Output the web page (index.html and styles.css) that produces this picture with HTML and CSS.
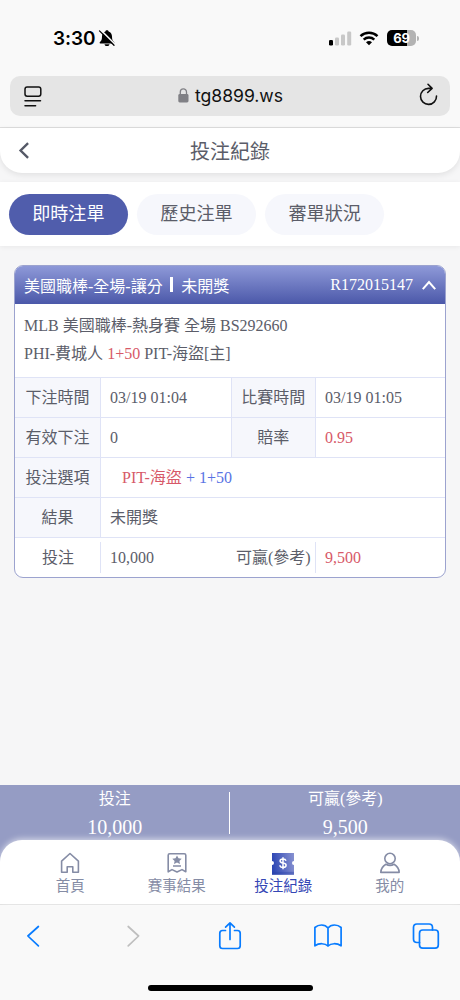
FILE: index.html
```html
<!DOCTYPE html>
<html lang="zh-Hant">
<head>
<meta charset="utf-8">
<meta name="viewport" content="width=device-width, initial-scale=1">
<title>投注紀錄</title>
<link rel="stylesheet" href="styles.css">
</head>
<body>
<div class="screen">
  <header class="browser-top">
    <div class="status">
      <div class="status-left">
        <span class="clock">3:30</span>
        <svg width="18" height="18" viewBox="0 0 18 18">
          <path d="M9 1.200c-.9 0-1.500.5-1.600 1.300C5 3.300 4 5.200 4 7.600c0 3-.6 4.200-2 5.500-.7.7-.4 1.300.3 1.300h13.400c.7 0 1-.6.3-1.300-1.400-1.300-2-2.500-2-5.500 0-2.400-1-4.300-3.400-5.100C10.500 1.700 9.900 1.200 9 1.200zM6.500 15.200h5c-.2 1.200-1.200 1.900-2.500 1.900s-2.300-.7-2.500-1.900z" fill="#000"/>
          <path d="M2.600.9l14 14" stroke="#f9f9f9" stroke-width="1.500"/>
          <path d="M1.500 1.900l14.500 14.400" stroke="#000" stroke-width="1.300" stroke-linecap="round"/>
        </svg>
      </div>
      <div class="status-right">
        <svg class="signal" width="23" height="15" viewBox="0 0 23 15">
          <rect x="0" y="9" width="4" height="5.500" rx="1.200" fill="#000"/>
          <rect x="6" y="6.500" width="4" height="8" rx="1.200" fill="#c8c8c8"/>
          <rect x="12" y="3.500" width="4" height="11" rx="1.200" fill="#c8c8c8"/>
          <rect x="18.200" y=".5" width="4" height="14" rx="1.200" fill="#c8c8c8"/>
        </svg>
        <svg class="wifi" width="20" height="15" viewBox="0 0 20 15">
          <path d="M1.500 5.200a12.500 12.500 0 0 1 17 0M4.700 8.600a7.800 7.800 0 0 1 10.600 0" fill="none" stroke="#000" stroke-width="2.500"/>
          <path d="M10 14.300l-3-3a4.500 4.500 0 0 1 6 0z" fill="#000"/>
        </svg>
        <div class="battery"><span class="level">69</span><i class="cap"></i></div>
      </div>
    </div>
    <div class="address">
      <svg width="18" height="21" viewBox="0 0 18 21" fill="none" stroke="#111" stroke-width="1.500" stroke-linecap="round">
        <rect x="1" y="1" width="15.800" height="9.200" rx="2.200"/><path d="M1 14.800h15.500M1 19.800h10.600"/>
      </svg>
      <div class="host">
        <svg width="11" height="15" viewBox="0 0 11 15"><rect x=".3" y="6" width="10.200" height="8.500" rx="1.400" fill="#808085"/><path d="M2.300 6.500V4a3.100 3.100 0 0 1 6.200 0v2.500" fill="none" stroke="#808085" stroke-width="1.300"/></svg>
        <span>tg8899.ws</span>
      </div>
      <svg class="reload" width="19" height="23" viewBox="0 0 19 23" fill="none" stroke="#111" stroke-width="1.600" stroke-linecap="round" stroke-linejoin="round">
        <path d="M12.300 5.400H9.500a8 8 0 1 0 8 7.700M9 1.300l4.100 4.100L8.700 9.500"/>
      </svg>
    </div>
  </header>

  <main class="page">
    <div class="title-bar">
      <svg width="12" height="18" viewBox="0 0 12 18" fill="none" stroke="#555967" stroke-width="2.400"><path d="M10.100 1.200L2.600 8.500l7.500 7.300"/></svg>
      <h1>投注紀錄</h1>
    </div>
    <nav class="tabs">
      <span class="tab active">即時注單</span>
      <span class="tab">歷史注單</span>
      <span class="tab">審單狀況</span>
    </nav>

    <section class="ticket">
      <div class="ticket-head">
        <span>美國職棒-全場-讓分</span><i class="bar"></i><span>未開獎</span>
        <span class="serial">R172015147</span>
        <svg width="14" height="10" viewBox="0 0 14 10" fill="none" stroke="#fff" stroke-width="2"><path d="M.8 9.200L7 2l6.200 7.200"/></svg>
      </div>
      <div class="match">
        <div>MLB 美國職棒-熱身賽 全場 BS292660</div>
        <div>PHI-費城人 <span class="red">1+50</span> PIT-海盜[主]</div>
      </div>
      <div class="grid">
        <div class="label">下注時間</div><div class="value">03/19 01:04</div><div class="label second">比賽時間</div><div class="value">03/19 01:05</div>
        <div class="label">有效下注</div><div class="value">0</div><div class="label second">賠率</div><div class="value red">0.95</div>
        <div class="label">投注選項</div><div class="value wide pick"><span class="red">PIT-海盜</span><span class="blue">&nbsp;+ 1+50</span></div>
        <div class="label">結果</div><div class="value wide">未開獎</div>
        <div class="label plain">投注</div><div class="value">10,000</div><div class="label plain">可贏(參考)</div><div class="value red">9,500</div>
      </div>
    </section>
  </main>

  <section class="summary">
    <div class="total"><span>投注</span><b>10,000</b></div>
    <i class="divider"></i>
    <div class="total"><span>可贏(參考)</span><b>9,500</b></div>
  </section>
  <nav class="app-nav">
    <div class="nav-item">
      <svg width="24" height="24" viewBox="0 0 24 24" fill="none" stroke="#858ca5" stroke-width="1.600" stroke-linejoin="round"><path d="M3.600 10.100L12 2.500l8.400 7.600v11.100h-5.600v-5.500H9.200v5.500H3.600z"/></svg>
      <span>首頁</span>
    </div>
    <div class="nav-item">
      <svg width="24" height="24" viewBox="0 0 24 24" fill="none" stroke="#858ca5" stroke-width="1.600" stroke-linejoin="round"><path d="M3.200 4.200q0-1.500 1.500-1.500h14.600q1.500 0 1.500 1.500v16.600L17 18.600l-5 2.400-5-2.400-3.800 2.200zM8 15h8"/><path d="M12 4.400l1.500 2.900 3.200.4-2.300 2.200.6 3.200-3-1.500-3 1.500.6-3.200-2.300-2.200 3.200-.4z" fill="#858ca5" stroke="none"/></svg>
      <span>賽事結果</span>
    </div>
    <div class="nav-item current">
      <svg width="24" height="24" viewBox="0 0 24 24"><defs><linearGradient id="ticketFill" x1="0" y1=".2" x2="1" y2=".1"><stop stop-color="#2e47b5"/><stop offset="1" stop-color="#8791d0"/></linearGradient></defs><path d="M1 2h22v8a2 2 0 0 0 0 4v9.800H1V14a2 2 0 0 0 0-4z" fill="url(#ticketFill)"/><path d="M1 22.300h22" stroke="#2941a8" stroke-opacity=".4" stroke-width="3"/><path d="M15 9.700c-.3-1.200-1.400-1.800-3-1.800-1.700 0-2.900.8-2.900 2.100 0 3 6 1.200 6 4.200 0 1.400-1.200 2.200-3 2.200-1.900 0-3.100-.8-3.200-2.200M12 6.200v12" fill="none" stroke="#fff" stroke-width="1.500"/></svg>
      <span>投注紀錄</span>
    </div>
    <div class="nav-item">
      <svg width="24" height="24" viewBox="0 0 24 24" fill="none" stroke="#858ca5" stroke-width="1.600" stroke-linejoin="round"><circle cx="12" cy="7.500" r="5.200"/><path d="M2.800 21.400c.2-3.500 2-6.300 5.100-8.100q4.100 2.200 8.200 0c3.100 1.800 4.900 4.600 5.100 8.100z"/></svg>
      <span>我的</span>
    </div>
  </nav>

  <footer class="browser-bottom">
    <div class="tools">
      <svg width="28" height="30" viewBox="0 0 28 30"><path d="M18.400 5.500L7.900 15l10.500 9.800"/></svg>
      <svg class="disabled" width="28" height="30" viewBox="0 0 28 30"><path d="M10.200 5.500L20.600 15l-10.400 9.800"/></svg>
      <svg width="28" height="30" viewBox="0 0 28 30"><path d="M9.500 9.500H6.500q-2.700 0-2.700 2.700v12.600q0 2.700 2.700 2.700h15q2.700 0 2.700-2.700V12.200q0-2.700-2.700-2.700h-3M14 18.500V2M9.600 6.200L14 1.800l4.400 4.400"/></svg>
      <svg width="28" height="30" viewBox="0 0 28 30"><path d="M14 7c-1.500-2-4-3-6.500-3S2.700 4.900.9 6.500v18.300C5 22 11 22 14 25c3-3 9-3 13.100-.2V6.500C25.300 4.900 23 4 20.500 4S15.500 5 14 7zv18"/></svg>
      <svg width="28" height="30" viewBox="0 0 28 30"><rect x="7.500" y="9" width="18.800" height="18.200" rx="3.200"/><path d="M7.500 21.500H5q-3.500 0-3.500-3.500V6.500Q1.500 3 5 3h12q3.500 0 3.500 3.500V9"/></svg>
    </div>
    <i class="home-bar"></i>
  </footer>
</div>
</body>
</html>
```
FILE: styles.css
```css
* { box-sizing: border-box; }
body { margin: 0; background: #f6f6f7; }
svg { display: block; flex: none; }
.screen {
  width: 460px; height: 1000px; display: flex; flex-direction: column; overflow: hidden;
  font-family: "Liberation Serif", "Noto Sans CJK TC", serif; font-size: 16px; color: #5b5d69;
}

/* browser chrome */
.browser-top { height: 128px; flex: none; background: #f9f9f9; border-bottom: 1px solid #dedede; font-family: Inter, sans-serif; }
.status { height: 76px; padding: 0 41px 0 53px; display: flex; align-items: center; justify-content: space-between; }
.status-left { display: flex; align-items: center; gap: 3px; }
.clock { font-size: 19px; font-weight: 600; color: #000; letter-spacing: -.1px; }
.status-right { display: flex; align-items: center; }
.signal { margin-right: 7.500px; }
.wifi { margin-right: 8px; }
.battery { display: flex; align-items: center; gap: 1px; }
.level {
  width: 29px; height: 16px; border-radius: 5px; background: linear-gradient(90deg, #000 69%, #b3b3b3 69%);
  color: #fff; font-size: 13px; font-weight: 700; line-height: 16px; text-align: center; letter-spacing: -.3px;
}
.cap { width: 2px; height: 5px; border-radius: 0 2px 2px 0; background: #b3b3b3; }
.address { height: 40px; margin: 0 10px; padding: 0 12px 0 14px; border-radius: 10px; background: #e5e5e5; display: flex; align-items: center; justify-content: space-between; }
.reload { margin-top: -3px; }
.host { display: flex; align-items: center; gap: 6px; font-size: 17.600px; letter-spacing: -.05px; color: #111; }
.host span { margin-top: -1px; }
.host svg { margin-top: -2px; }

/* page */
.page { flex: 1; background: #f6f6f7; }
.title-bar { height: 45px; padding: 0 18px; display: grid; grid-template-columns: 12px 1fr 12px; align-items: center; background: #fff; border-radius: 0 0 22px 22px; box-shadow: 0 2px 6px rgba(0,0,0,.09); }
.title-bar h1 { margin: 2px 0 0; font-size: 20px; line-height: 30px; font-weight: 400; text-align: center; }
.tabs { height: 64px; margin-top: 9px; padding: 12px 9px; display: flex; gap: 9.500px; background: #fff; box-shadow: 0 1px 5px rgba(0,0,0,.06); }
.tab { width: 118.700px; height: 41px; border-radius: 21px; background: #f6f7fc; font-size: 18.100px; line-height: 41px; text-align: center; }
.tab.active { background: #505dac; color: #fff; }

.ticket { margin: 18.500px 14px 0; height: 313px; border: 1px solid #9ca3cf; border-radius: 9px; overflow: hidden; background: #fff; }
.ticket-head { height: 38px; padding: 0 9px; display: flex; align-items: center; background: linear-gradient(#8e99d8, #4b58a9); color: #fff; }
.bar { width: 2.500px; height: 15px; margin: 0 8.500px 0 7.500px; background: #fff; }
.serial { margin-left: auto; margin-right: 9px; }
.match { height: 73.500px; padding: 8px 9px; line-height: 28px; }
.grid { display: grid; grid-template-columns: 86px 129.500px 85.500px 1fr; grid-auto-rows: 40px; }
.label, .value { border-top: 1px solid #dfe3f6; line-height: 39px; white-space: nowrap; }
.label { background: #f6f7fc; border-right: 1px solid #dfe3f6; text-align: center; }
.label.second { border-left: 1px solid #dfe3f6; }
.label.plain { border-right: 0; background: linear-gradient(#dfe3f6, #dfe3f6) right 4px / 1px 31px no-repeat; }
.value { padding-left: 9px; }
.value.wide { grid-column: 2 / -1; }
.value.pick { padding-left: 21px; }
.red { color: #d75968; }
.blue { color: #5873e4; }

.summary { height: 77px; margin-bottom: -22px; flex: none; display: flex; padding-top: 1px; background: #959cc4; color: #fff; }
.total { flex: 1; display: flex; flex-direction: column; align-items: center; line-height: 25px; }
.total b { font-size: 20px; font-weight: 400; line-height: 32px; }
.divider { width: 1px; height: 42px; margin: 6px 1px 0 -1px; background: #fff; }
.app-nav { height: 64px; flex: none; padding: 11px 17px 0; display: flex; background: #fff; border-radius: 22px 22px 0 0; box-shadow: 0 -1px 6px rgba(255,255,255,.65); z-index: 1; }
.nav-item { flex: 1; display: flex; flex-direction: column; align-items: center; color: #858ca5; font-size: 14.500px; line-height: 23px; }
.nav-item.current { color: #3547b5; }

.browser-bottom { height: 96px; flex: none; background: #f9f9f9; border-top: 1px solid #dedede; display: flex; flex-direction: column; align-items: center; }
.tools { width: 100%; padding: 16px 20px 0; display: flex; justify-content: space-between; fill: none; stroke: #087cff; stroke-width: 1.700; stroke-linecap: round; stroke-linejoin: round; }
.disabled { stroke: #bfbfbf; }
.home-bar { width: 165px; height: 6px; margin-top: 34px; border-radius: 3px; background: #000; }
```
